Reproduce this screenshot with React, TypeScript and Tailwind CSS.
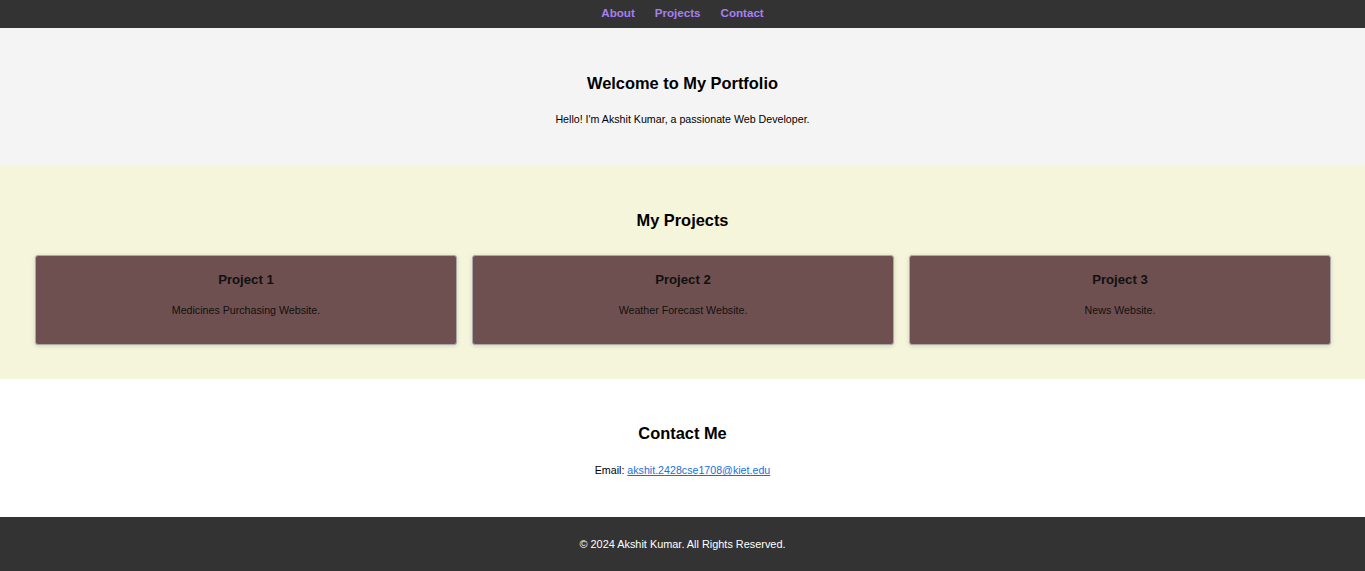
import React from "react";

const projects = [
  { title: "Project 1", desc: "Medicines Purchasing Website." },
  { title: "Project 2", desc: "Weather Forecast Website." },
  { title: "Project 3", desc: "News Website." },
];

export default function App() {
  return (
    <div className="w-full font-['Liberation_Sans',Arial,sans-serif] text-black">
      <nav className="h-[28px] bg-[#333333] flex items-center justify-center pb-[4px]">
        {["About", "Projects", "Contact"].map((l) => (
          <a key={l} href="#" className="mx-[10px] text-[11.6px] leading-[13px] font-bold text-[#a680f0] no-underline">
            {l}
          </a>
        ))}
      </nav>

      <section className="bg-[#f4f4f4] pt-[46px] pb-[41px] text-center">
        <h2 className="text-[16.4px] leading-[18px] font-bold">Welcome to My Portfolio</h2>
        <p className="mt-[21px] text-[10.67px] leading-[12px]">Hello! I'm Akshit Kumar, a passionate Web Developer.</p>
      </section>

      <section className="bg-[#f5f5dc] pt-[45px] pb-[34px]">
        <h2 className="text-[16.4px] leading-[18px] font-bold text-center">My Projects</h2>
        <div className="mt-[26px] flex gap-[15px] pl-[35px] pr-[34px]">
          {projects.map((p) => (
            <div
              key={p.title}
              className="flex-1 h-[90px] bg-[#6f5050] border border-[#a9a9a9] rounded-[3px] shadow-[0_1px_4px_rgba(0,0,0,0.15)] text-center pt-[16px]"
            >
              <h3 className="text-[13.2px] leading-[16px] font-bold text-[#111]">{p.title}</h3>
              <p className="mt-[16px] text-[10.67px] leading-[12px] text-[#111]">{p.desc}</p>
            </div>
          ))}
        </div>
      </section>

      <section className="bg-white pt-[45px] pb-[41px] text-center">
        <h2 className="text-[16.4px] leading-[18px] font-bold">Contact Me</h2>
        <p className="mt-[22px] text-[10.67px] leading-[12px]">
          Email:{" "}
          <a href="#" className="text-[#1a6fd8] underline">akshit.2428cse1708@kiet.edu</a>
        </p>
      </section>

      <footer className="h-[54px] bg-[#333333] flex items-center justify-center text-white text-[10.9px] leading-[12px]">
        © 2024 Akshit Kumar. All Rights Reserved.
      </footer>
    </div>
  );
}
